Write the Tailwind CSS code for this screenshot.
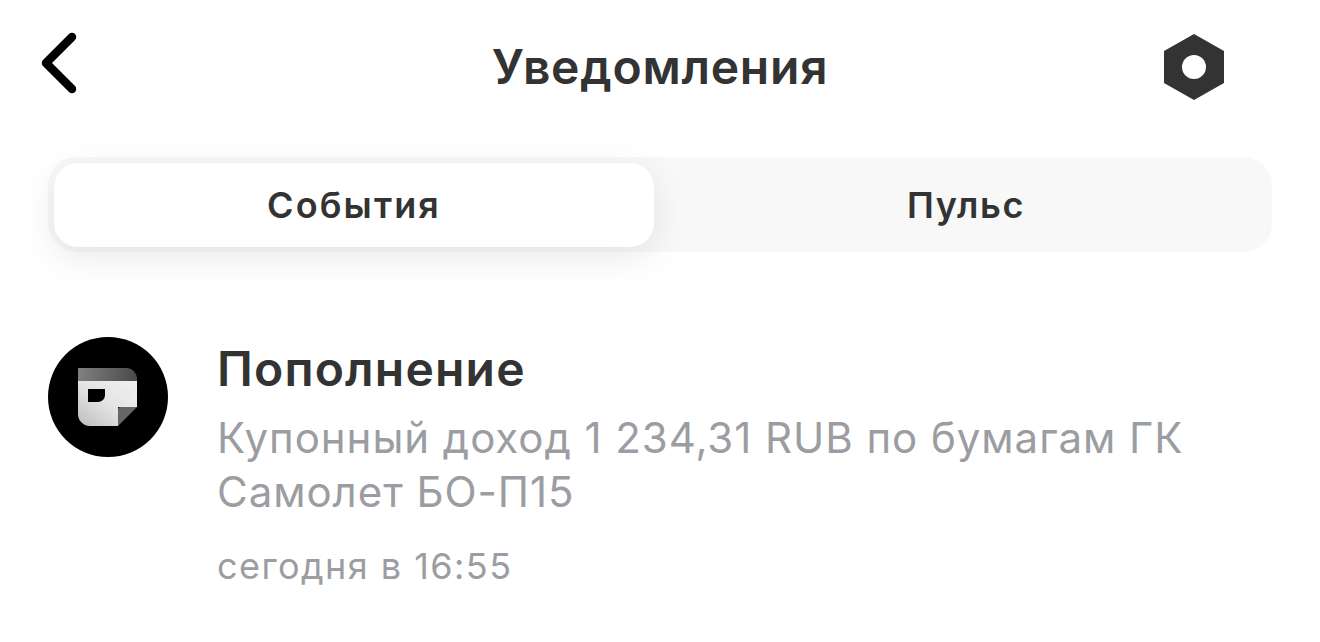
<!DOCTYPE html>
<html lang="ru">
<head>
    <meta charset="UTF-8">
    <meta name="viewport" content="width=device-width, initial-scale=1.0">
    <title>Уведомления</title>
    <script src="https://cdn.jsdelivr.net/npm/@tailwindcss/browser@4"></script>
</head>
<body class="bg-white h-[642px] overflow-hidden font-['Inter',sans-serif] text-[#333333]">

    <header class="h-[136px] pt-[24px] grid grid-cols-[1fr_auto_1fr] items-start">
        <div class="pl-[41px]">
            <svg class="w-[40px] h-[72px]" viewBox="0 0 40 72" fill="none">
                <path d="M31 13 L5 39 L31 65" stroke="#000" stroke-width="8.5" stroke-linecap="round" stroke-linejoin="round"/>
            </svg>
        </div>
        <h1 class="text-[48px] leading-[88px] font-semibold -mt-[1px] tracking-[0.75px]">Уведомления</h1>
        <div class="flex justify-end pr-[95px]">
            <svg class="w-[62px] h-[66px] mt-[10px]" viewBox="0 0 62 66">
                <path fill-rule="evenodd" fill="#333333" d="M31 0 L61 17 V49 L31 66 L1 49 V17 Z M31 21 a12 12 0 1 0 0 24 a12 12 0 1 0 0 -24 Z"/>
            </svg>
        </div>
    </header>

    <div class="mx-[48px] mt-[21px] h-[95px] rounded-[28px] bg-[#f8f8f8] p-[6px] pb-[5px] flex">
        <div class="w-[600px] h-[84px] rounded-[24px] bg-white shadow-[0_10px_36px_rgba(0,0,0,0.09)] flex items-center justify-center text-[36px] tracking-[2.1px] font-semibold">События</div>
        <div class="flex-1 flex items-center justify-center text-[36px] tracking-[1.6px] font-semibold pl-[12px]">Пульс</div>
    </div>

    <section class="mt-[85px] px-[48px] flex gap-[49px]">
        <svg class="w-[120px] h-[120px] shrink-0" viewBox="0 0 120 120">
            <defs>
                <linearGradient id="band" x1="0" y1="0" x2="1" y2="0">
                    <stop offset="0" stop-color="#808080"/>
                    <stop offset="1" stop-color="#4a4a4a"/>
                </linearGradient>
                <linearGradient id="sheet" x1="0" y1="1" x2="1" y2="0">
                    <stop offset="0" stop-color="#bdbdbd"/>
                    <stop offset="0.5" stop-color="#e4e4e4"/>
                    <stop offset="1" stop-color="#f0f0f0"/>
                </linearGradient>
            </defs>
            <circle cx="60" cy="60" r="60" fill="#000"/>
            <path fill="url(#sheet)" d="M30 44 H89 V70 H70 V89 H42 a12 12 0 0 1 -12 -12 Z"/>
            <path fill="url(#band)" d="M30 31 H78 a11 11 0 0 1 11 11 V44 H30 Z"/>
            <path fill="#000" d="M40 52 H57 V58 a7 7 0 0 1 -7 7 H40 Z"/>
            <path fill="#666666" d="M70 89 V73 a3 3 0 0 1 3 -3 H89 Z"/>
        </svg>
        <div class="min-w-0">
            <h2 class="text-[48px] leading-[64px] font-semibold tracking-[1.2px]">Пополнение</h2>
            <p class="text-[42px] leading-[54px] tracking-[0.95px] text-[#9b9da2] mt-[10px] w-[1040px]">Купонный доход 1 234,31 RUB по бумагам ГК<br>Самолет БО-П15</p>
            <p class="text-[36px] leading-[48px] tracking-[1.45px] text-[#9b9da2] mt-[23px]">сегодня в 16:55</p>
        </div>
    </section>

</body>
</html>
